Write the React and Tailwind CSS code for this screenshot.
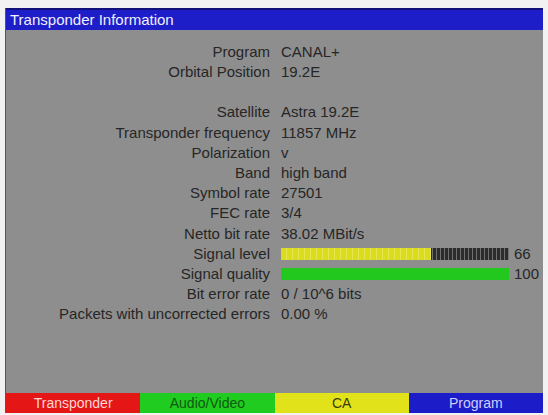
import React from 'react';

const rows = [
  { label: 'Program', value: 'CANAL+' },
  { label: 'Orbital Position', value: '19.2E' },
  { label: '', value: '' },
  { label: 'Satellite', value: 'Astra 19.2E' },
  { label: 'Transponder frequency', value: '11857 MHz' },
  { label: 'Polarization', value: 'v' },
  { label: 'Band', value: 'high band' },
  { label: 'Symbol rate', value: '27501' },
  { label: 'FEC rate', value: '3/4' },
  { label: 'Netto bit rate', value: '38.02 MBit/s' },
  { label: 'Signal level', bar: 66, color: 'yellow' },
  { label: 'Signal quality', bar: 100, color: 'green' },
  { label: 'Bit error rate', value: '0 / 10^6 bits' },
  { label: 'Packets with uncorrected errors', value: '0.00 %' },
];

const buttons = [
  { text: 'Transponder', cls: 'bg-[#e41616] text-[#ffd6d6]' },
  { text: 'Audio/Video', cls: 'bg-[#20cc20] text-[#0e5a0e]' },
  { text: 'CA', cls: 'bg-[#e2e21a] text-[#3a3a08]' },
  { text: 'Program', cls: 'bg-[#1c1cc8] text-[#cfcfff]' },
];

function LevelBar({ value, color }) {
  return (
    <div className="flex items-center gap-[5px]">
      <div className="flex h-[12px] w-[228px] bg-[repeating-linear-gradient(90deg,#2c2c2c_0_3px,#707070_3px_4px)]">
        <div
          className={
            color === 'yellow'
              ? 'h-full bg-[#dcdc1e] bg-[repeating-linear-gradient(90deg,#dcdc1e_0_5px,#e6e650_5px_6px)]'
              : 'h-full bg-[#22c81e]'
          }
          style={{ width: `${value}%` }}
        />
      </div>
      <span>{value}</span>
    </div>
  );
}

export default function App() {
  return (
    <div className="w-[548px] h-[415px] bg-[#f2f2f2] pt-[8px] pl-[5px] pr-[5px] pb-[2px] overflow-hidden font-['Liberation_Sans',Arial,sans-serif]">
      <div className="flex h-full flex-col border-l border-[#555] bg-[#8e8e8e]">
        <div className="h-[22px] shrink-0 border-t-2 border-[#12127a] bg-[#1e1ec8] pl-[4px] text-[15px] leading-[19px] text-[#f0f0ff]">
          Transponder Information
        </div>
        <div className="flex-1 pt-[12px] text-[15px] text-[#262626]">
          <div className="grid grid-cols-[264px_1fr] auto-rows-[20.2px] items-center gap-x-[11px]">
            {rows.map((r, i) => (
              <React.Fragment key={i}>
                <div className="text-right whitespace-nowrap">{r.label}</div>
                <div className="whitespace-nowrap">
                  {r.bar !== undefined ? <LevelBar value={r.bar} color={r.color} /> : r.value}
                </div>
              </React.Fragment>
            ))}
          </div>
        </div>
        <div className="grid h-[20px] shrink-0 grid-cols-4 text-[14px] leading-[20px]">
          {buttons.map((b) => (
            <div key={b.text} className={`text-center ${b.cls}`}>
              {b.text}
            </div>
          ))}
        </div>
      </div>
    </div>
  );
}
